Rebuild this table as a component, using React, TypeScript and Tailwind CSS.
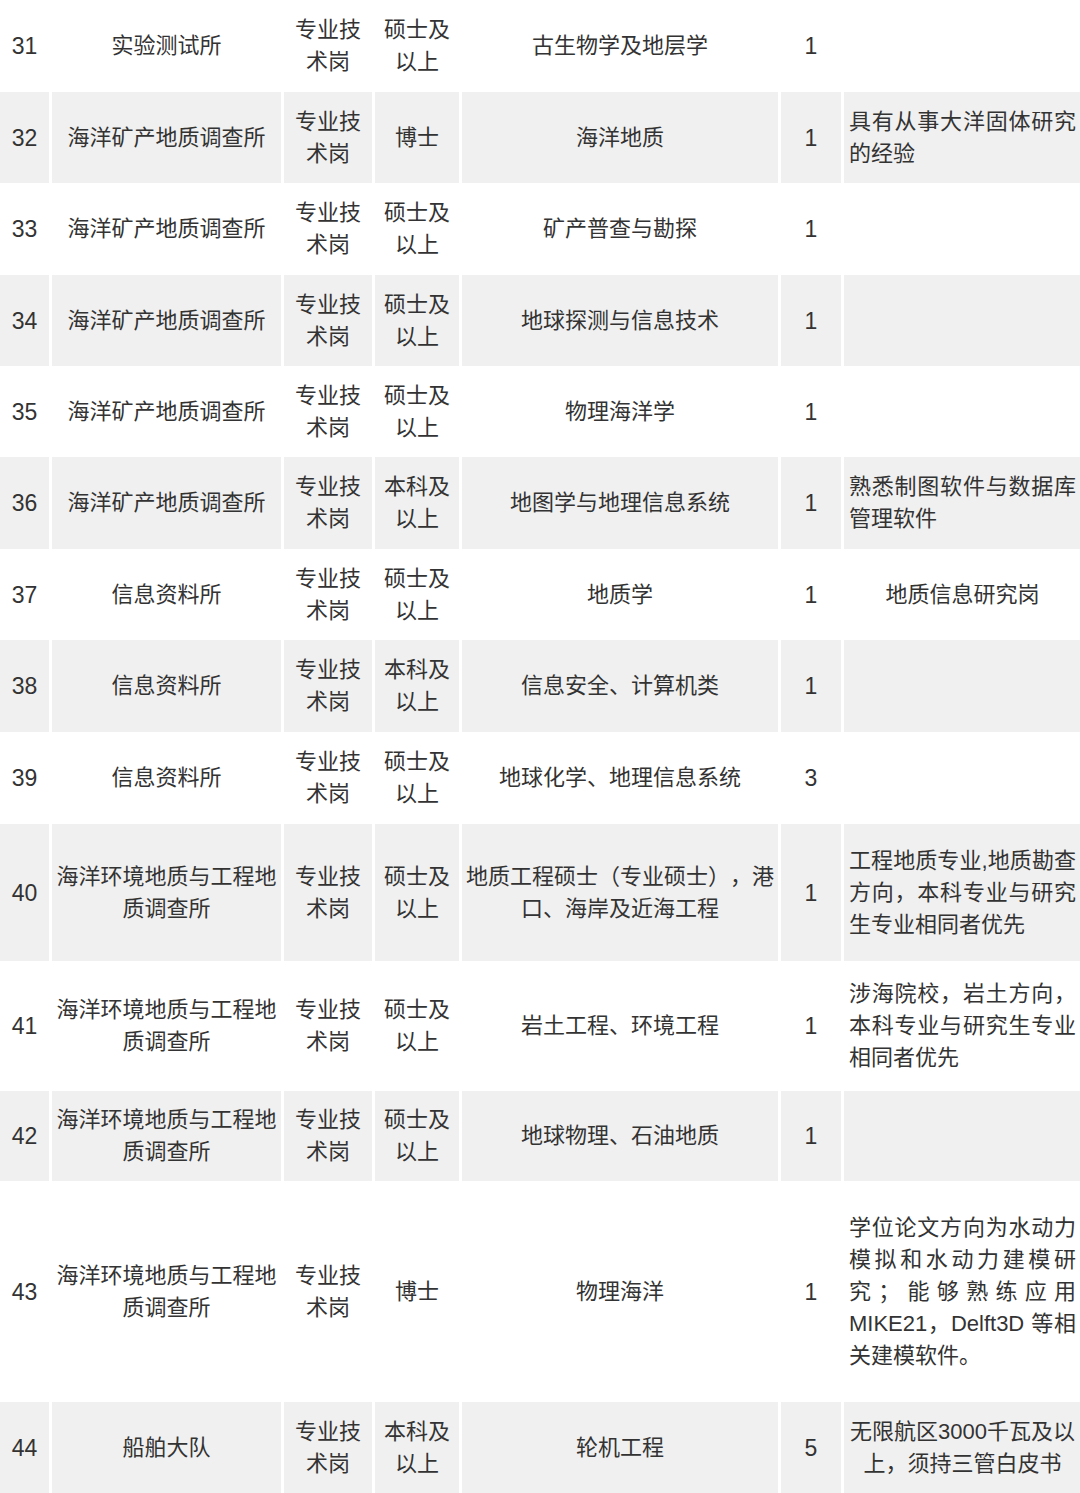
import React from 'react';

type Row = {
  no: string;
  dept: string;
  type: string;
  degree: string;
  major: string;
  count: string;
  note?: string;
  noteCenter?: boolean;
  h: string;
};

const rows: Row[] = [
  { no: '31', dept: '实验测试所', type: '专业技术岗', degree: '硕士及以上', major: '古生物学及地层学', count: '1', h: 'h-[92px]' },
  { no: '32', dept: '海洋矿产地质调查所', type: '专业技术岗', degree: '博士', major: '海洋地质', count: '1', note: '具有从事大洋固体研究的经验', h: 'h-[91px]' },
  { no: '33', dept: '海洋矿产地质调查所', type: '专业技术岗', degree: '硕士及以上', major: '矿产普查与勘探', count: '1', h: 'h-[92px]' },
  { no: '34', dept: '海洋矿产地质调查所', type: '专业技术岗', degree: '硕士及以上', major: '地球探测与信息技术', count: '1', h: 'h-[91px]' },
  { no: '35', dept: '海洋矿产地质调查所', type: '专业技术岗', degree: '硕士及以上', major: '物理海洋学', count: '1', h: 'h-[91px]' },
  { no: '36', dept: '海洋矿产地质调查所', type: '专业技术岗', degree: '本科及以上', major: '地图学与地理信息系统', count: '1', note: '熟悉制图软件与数据库管理软件', h: 'h-[92px]' },
  { no: '37', dept: '信息资料所', type: '专业技术岗', degree: '硕士及以上', major: '地质学', count: '1', note: '地质信息研究岗', noteCenter: true, h: 'h-[91px]' },
  { no: '38', dept: '信息资料所', type: '专业技术岗', degree: '本科及以上', major: '信息安全、计算机类', count: '1', h: 'h-[92px]' },
  { no: '39', dept: '信息资料所', type: '专业技术岗', degree: '硕士及以上', major: '地球化学、地理信息系统', count: '3', h: 'h-[92px]' },
  { no: '40', dept: '海洋环境地质与工程地质调查所', type: '专业技术岗', degree: '硕士及以上', major: '地质工程硕士（专业硕士），港口、海岸及近海工程', count: '1', note: '工程地质专业,地质勘查方向，本科专业与研究生专业相同者优先', h: 'h-[137px]' },
  { no: '41', dept: '海洋环境地质与工程地质调查所', type: '专业技术岗', degree: '硕士及以上', major: '岩土工程、环境工程', count: '1', note: '涉海院校，岩土方向，本科专业与研究生专业相同者优先', h: 'h-[130px]' },
  { no: '42', dept: '海洋环境地质与工程地质调查所', type: '专业技术岗', degree: '硕士及以上', major: '地球物理、石油地质', count: '1', h: 'h-[90px]' },
  { no: '43', dept: '海洋环境地质与工程地质调查所', type: '专业技术岗', degree: '博士', major: '物理海洋', count: '1', note: '学位论文方向为水动力模拟和水动力建模研究；能够熟练应用MIKE21，Delft3D 等相关建模软件。', h: 'h-[221px]' },
  { no: '44', dept: '船舶大队', type: '专业技术岗', degree: '本科及以上', major: '轮机工程', count: '5', note: '无限航区3000千瓦及以上，须持三管白皮书', noteCenter: true, h: 'h-[91px]' },
];

const Cell: React.FC<{ w: string; gray: boolean; className?: string; children?: React.ReactNode }> = ({ w, gray, className = '', children }) => (
  <div className={`${w} shrink-0 flex items-center ${gray ? 'bg-[#f0f0f0]' : 'bg-white'} ${className}`}>
    {children}
  </div>
);

const App: React.FC = () => {
  return (
    <div
      className="w-[1080px] h-[1493px] overflow-hidden bg-white text-[#333333] text-[22px] leading-[32px] [text-spacing-trim:space-all]"
      style={{ fontFamily: '"Liberation Sans", "Noto Sans CJK SC", sans-serif' }}
    >
      {rows.map((r, i) => {
        const gray = i % 2 === 1;
        return (
          <div key={r.no} className={`flex gap-[3px] ${r.h}`}>
            <Cell w="w-[49px]" gray={gray} className="justify-center text-[23px]">{r.no}</Cell>
            <Cell w="w-[229px]" gray={gray} className="justify-center text-center px-[3px]">
              <span className={r.dept.length > 10 ? 'w-[224px]' : ''}>{r.dept}</span>
            </Cell>
            <Cell w="w-[88px]" gray={gray} className="justify-center text-center">
              <span className="w-[66px]">{r.type}</span>
            </Cell>
            <Cell w="w-[84px]" gray={gray} className="justify-center text-center">
              <span className="w-[66px]">{r.degree}</span>
            </Cell>
            <Cell w="w-[316px]" gray={gray} className="justify-center text-center px-[3px]">{r.major}</Cell>
            <Cell w="w-[60px]" gray={gray} className="justify-center text-[23px]">{r.count}</Cell>
            <Cell w="w-[236px]" gray={gray} className="pl-[5px] pr-[4px]">
              {r.note && (
                <div className={`w-full ${r.noteCenter ? 'text-center' : 'text-justify'}`}>{r.note}</div>
              )}
            </Cell>
          </div>
        );
      })}
    </div>
  );
};

export default App;
